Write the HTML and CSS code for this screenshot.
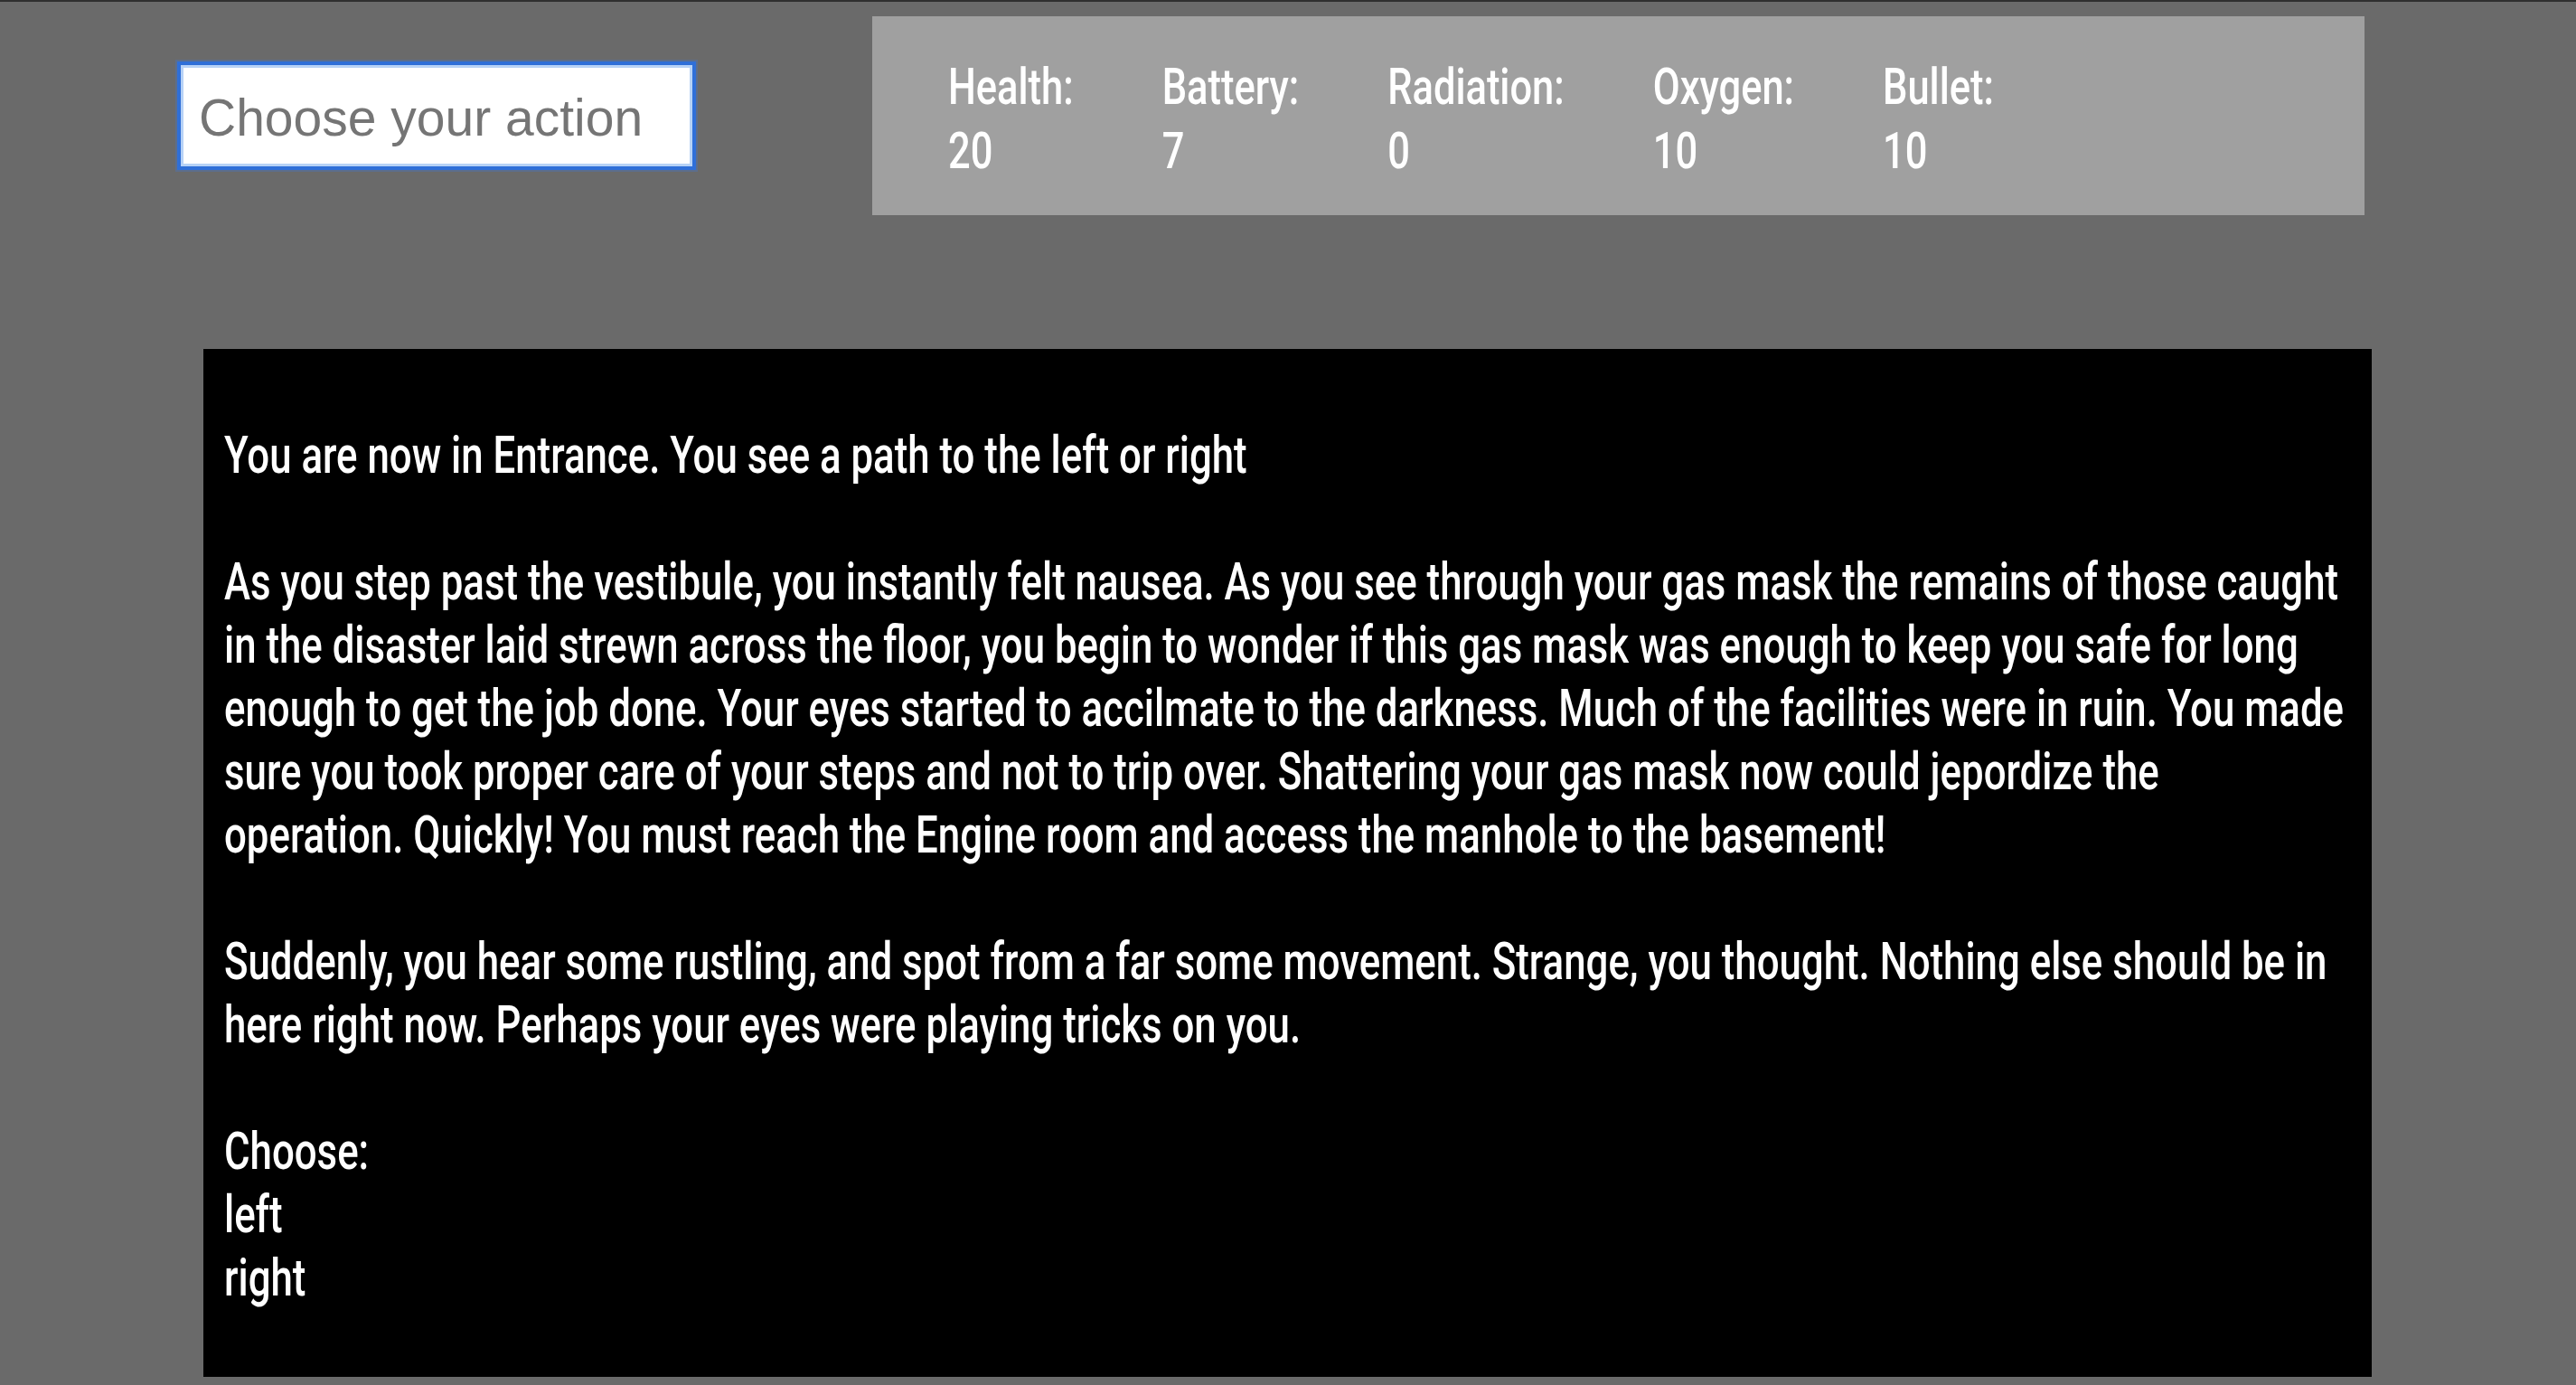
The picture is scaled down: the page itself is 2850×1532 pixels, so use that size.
FILE: index.html
```html
<!DOCTYPE html>
<html lang="en">
<head>
<meta charset="utf-8">
<title>Game</title>
<link rel="stylesheet" href="styles.css">
</head>
<body>
<div class="page">
  <header class="top">
    <input class="action" type="text" placeholder="Choose your action">
    <div class="stats">
      <div class="stats-row">
        <div class="stat"><div class="label">Health:</div><div class="value">20</div></div>
        <div class="stat"><div class="label">Battery:</div><div class="value">7</div></div>
        <div class="stat"><div class="label">Radiation:</div><div class="value">0</div></div>
        <div class="stat"><div class="label">Oxygen:</div><div class="value">10</div></div>
        <div class="stat"><div class="label">Bullet:</div><div class="value">10</div></div>
      </div>
    </div>
  </header>
  <main class="story">
    <div class="text">
      <p class="line">You are now in Entrance. You see a path to the left or right</p>
      <p class="line blank">&nbsp;</p>
      <p class="line">As you step past the vestibule, you instantly felt nausea. As you see through your gas mask the remains of those caught</p>
      <p class="line">in the disaster laid strewn across the floor, you begin to wonder if this gas mask was enough to keep you safe for long</p>
      <p class="line">enough to get the job done. Your eyes started to accilmate to the darkness. Much of the facilities were in ruin. You made</p>
      <p class="line">sure you took proper care of your steps and not to trip over. Shattering your gas mask now could jepordize the</p>
      <p class="line">operation. Quickly! You must reach the Engine room and access the manhole to the basement!</p>
      <p class="line blank">&nbsp;</p>
      <p class="line">Suddenly, you hear some rustling, and spot from a far some movement. Strange, you thought. Nothing else should be in</p>
      <p class="line">here right now. Perhaps your eyes were playing tricks on you.</p>
      <p class="line blank">&nbsp;</p>
      <p class="line">Choose:</p>
      <p class="line">left</p>
      <p class="line">right</p>
    </div>
  </main>
</div>
</body>
</html>
```
FILE: styles.css
```css
html {
  background: #6a6a6a;
}
body {
  margin: 0;
  background: #6a6a6a;
  border-top: 2px solid #2f2f2f;
  height: 1530px;
  overflow: hidden;
}
.page {
  display: flex;
  flex-direction: column;
}
.top {
  display: flex;
  align-items: center;
  padding-top: 16px;
}
.action {
  box-sizing: border-box;
  width: 566px;
  height: 112px;
  margin-left: 200px;
  margin-right: 199px;
  padding: 4px 17px 0 17px;
  border: 3px solid #b7d2f6;
  outline: 4px solid #2f6fd8;
  box-shadow: 0 0 0 6px rgba(60, 120, 220, 0.3);
  background: #fff;
  font-family: "Liberation Sans", Arial, sans-serif;
  font-size: 57px;
  color: #222;
}
.action::placeholder {
  color: #757575;
}
.stats {
  box-sizing: border-box;
  width: 1651px;
  height: 220px;
  background: #a0a0a0;
  padding: 43px 0 0 84px;
  overflow: hidden;
}
.stats-row {
  display: flex;
  gap: 124px;
  transform: scaleX(0.79);
  transform-origin: left top;
  font-family: Roboto, "Liberation Sans", sans-serif;
  font-weight: 500;
  font-size: 55px;
  line-height: 71px;
  color: #fff;
  white-space: nowrap;
}
.story {
  box-sizing: border-box;
  width: 2399px;
  margin: 148px 0 0 225px;
  padding: 82px 23px 75px 23px;
  background: #000;
  overflow: hidden;
}
.text {
  transform: scaleX(0.755);
  transform-origin: left top;
  color: #fff;
  font-family: Roboto, "Liberation Sans", sans-serif;
  font-weight: 500;
  font-size: 58px;
  line-height: 70px;
}
.line {
  margin: 0;
  white-space: nowrap;
}
```
